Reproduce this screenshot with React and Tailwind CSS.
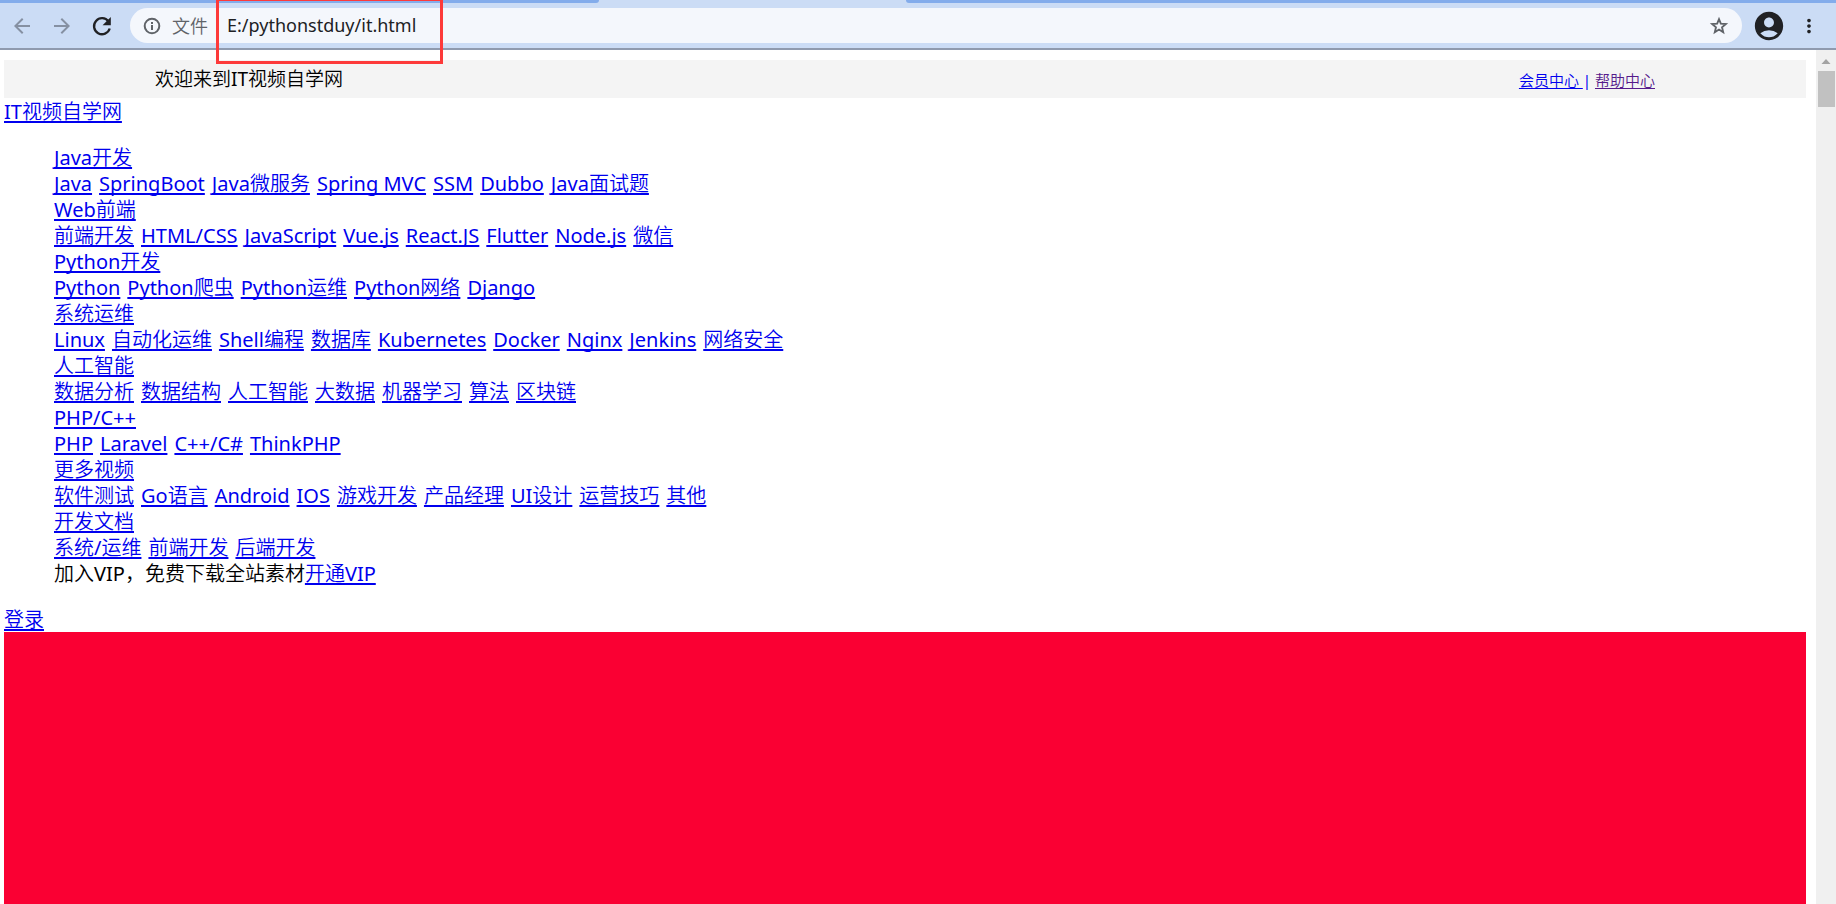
import { MdArrowBack, MdArrowForward, MdAccountCircle, MdMoreVert } from 'react-icons/md';

const menu = [
  { title: 'Java开发', items: ['Java', 'SpringBoot', 'Java微服务', 'Spring MVC', 'SSM', 'Dubbo', 'Java面试题'] },
  { title: 'Web前端', items: ['前端开发', 'HTML/CSS', 'JavaScript', 'Vue.js', 'React.JS', 'Flutter', 'Node.js', '微信'] },
  { title: 'Python开发', items: ['Python', 'Python爬虫', 'Python运维', 'Python网络', 'Django'] },
  {
    title: '系统运维',
    items: ['Linux', '自动化运维', 'Shell编程', '数据库', 'Kubernetes', 'Docker', 'Nginx', 'Jenkins', '网络安全']
  },
  { title: '人工智能', items: ['数据分析', '数据结构', '人工智能', '大数据', '机器学习', '算法', '区块链'] },
  { title: 'PHP/C++', items: ['PHP', 'Laravel', 'C++/C#', 'ThinkPHP'] },
  {
    title: '更多视频',
    items: ['软件测试', 'Go语言', 'Android', 'IOS', '游戏开发', '产品经理', 'UI设计', '运营技巧', '其他']
  },
  { title: '开发文档', items: ['系统/运维', '前端开发', '后端开发'] }
];

const Link = ({ children }) => (
  <a
    href="#"
    className="text-[#0000ee] underline decoration-2 underline-offset-2 [text-decoration-skip-ink:none]"
  >
    {children}
  </a>
);

const RefreshIcon = () => (
  <svg width="24" height="24" viewBox="0 0 24 24" fill="none">
    <path d="M18.500 7.500A8 8 0 1 0 19.700 14.500" stroke="currentColor" strokeWidth="2.300" />
    <path d="M20.800 3v8.200h-8.200z" fill="currentColor" />
  </svg>
);

const InfoIcon = () => (
  <svg width="20" height="20" viewBox="0 0 20 20" fill="none" stroke="currentColor" strokeWidth="2">
    <circle cx="10" cy="10" r="7.300" />
    <path d="M10 9v5M10 6v2" />
  </svg>
);

const StarIcon = () => (
  <svg width="22" height="22" viewBox="0 0 24 24" fill="none" stroke="currentColor" strokeWidth="2">
    <path d="M12 4.500l2 5 5.500.4-4.200 3.500 1.300 5.400-4.600-2.900-4.600 2.900 1.300-5.400-4.200-3.500 5.500-.4z" />
  </svg>
);

const Toolbar = () => (
  <header className="relative bg-[#cbdcf5] border-b-2 border-[#8f9aae]">
    {/* 标签栏底边 */}
    <div className="flex justify-between h-[3px]">
      <div className="w-[599px] bg-[#83aceb] rounded-br-sm" />
      <div className="w-[930px] bg-[#83aceb] rounded-bl-sm" />
    </div>
    <div className="flex items-center h-[45px] pl-[10px] pr-4">
      <button type="button" aria-label="后退" className="text-[#8590a2] mr-4">
        <MdArrowBack size={24} />
      </button>
      <button type="button" aria-label="前进" className="text-[#8590a2] mr-4">
        <MdArrowForward size={24} />
      </button>
      <button type="button" aria-label="刷新" className="text-[#202124] mr-4">
        <RefreshIcon />
      </button>
      <div className="flex flex-1 items-center h-[35px] px-3 rounded-full bg-[#f4f7fc]">
        <span className="text-[#5f6368]">
          <InfoIcon />
        </span>
        <span className="ml-[10px] pr-2 text-lg leading-5 text-[#5f6368] border-r border-[#b4b8be]">文件</span>
        <input
          type="text"
          aria-label="地址"
          defaultValue="E:/pythonstduy/it.html"
          className="flex-1 ml-[10px] pb-0.5 text-lg text-[#202124] bg-transparent outline-none"
        />
        <button type="button" aria-label="收藏" className="text-[#5f6368]">
          <StarIcon />
        </button>
      </div>
      <button type="button" aria-label="用户" className="ml-[10px] text-[#202124]">
        <MdAccountCircle size={34} />
      </button>
      <button type="button" aria-label="菜单" className="ml-3 text-[#202124]">
        <MdMoreVert size={22} />
      </button>
    </div>
    {/* 地址标注框 */}
    <div className="absolute left-[216px] -top-0.5 w-[227px] h-[66px] border-3 border-[#fd3a3a] pointer-events-none" />
  </header>
);

const App = () => {
  return (
    <div className="flex flex-col min-h-screen bg-white font-['Noto_Sans','Noto_Sans_CJK_SC_DemiLight','Noto_Sans_CJK_SC_Light','Noto_Sans_CJK_SC',sans-serif]">
      <Toolbar />
      <div className="flex flex-1">
        <main className="flex flex-col flex-1 pl-1 pr-[10px] pt-[10px] text-xl leading-[26px] text-black">
          <div className="mb-px bg-[#f4f4f4]">
            <div className="flex items-center justify-between max-w-[1500px] h-[38px] mx-auto">
              <span className="text-[19px]">欢迎来到IT视频自学网</span>
              <span className="pt-0.5 text-[15px]">
                <a href="#" className="underline underline-offset-2 whitespace-pre text-[#0000ee]">{'会员中心 '}</a>
                <span className="text-[#0000ee]">|</span>{' '}
                <a href="#" className="underline underline-offset-2 text-[#551a8b]">帮助中心</a>
              </span>
            </div>
          </div>
          <div>
            <Link>IT视频自学网</Link>
          </div>
          <ul className="my-5 pl-[50px]">
            {menu.map((group) => (
              <li key={group.title}>
                <Link>{group.title}</Link>
                <div className="flex flex-wrap gap-x-[7px]">
                  {group.items.map((item) => (
                    <Link key={item}>{item}</Link>
                  ))}
                </div>
              </li>
            ))}
            <li>
              加入VIP，免费下载全站素材<Link>开通VIP</Link>
            </li>
          </ul>
          <div className="h-[25px]">
            <Link>登录</Link>
          </div>
          <div className="flex-1 bg-[#fa0033]" />
        </main>

        {/* 滚动条 */}
        <div className="w-5 pt-[9px] bg-[#f0f0f0]">
          <svg width="20" height="6" viewBox="0 0 20 6" fill="#a3a3a3">
            <path d="M5.500 5L10 0l4.500 5z" />
          </svg>
          <div className="w-[17px] h-9 mx-auto mt-[6px] bg-[#c1c1c1]" />
        </div>
      </div>
    </div>
  );
};

export default App;
